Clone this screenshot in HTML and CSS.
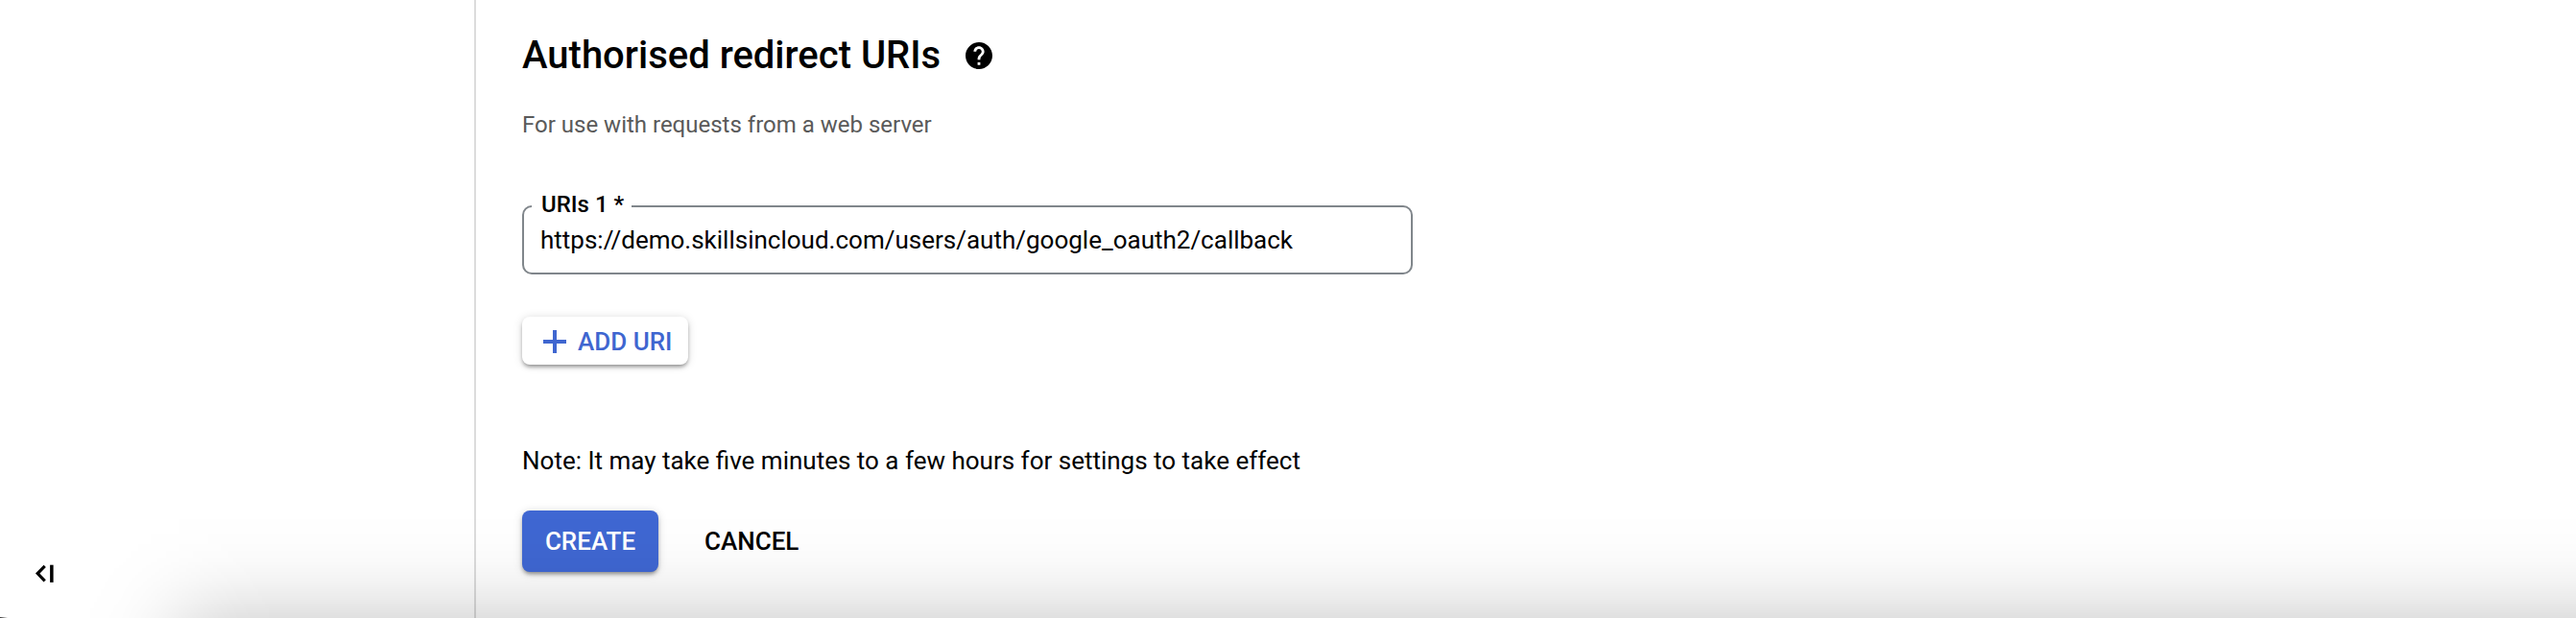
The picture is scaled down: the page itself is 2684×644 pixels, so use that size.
FILE: index.html
```html
<!DOCTYPE html>
<html lang="en-GB">
<head>
  <meta charset="utf-8">
  <title>Create OAuth client ID</title>
  <link rel="stylesheet" href="styles.css">
</head>
<body>
  <aside class="sidebar">
    <button class="collapse" aria-label="Collapse menu">
      <svg width="20" height="20" viewBox="0 0 20 20">
        <path d="M10.7 1.8 3.2 9.6l7.5 7.8" fill="none" stroke="#000" stroke-width="3.2"/>
        <path d="M16.1.7v18.2h3.5V.7z"/>
      </svg>
    </button>
  </aside>

  <main class="content">
    <h2 class="title">
      Authorised redirect URIs
      <svg class="help" viewBox="2 2 20 20">
        <path d="M12 2C6.48 2 2 6.48 2 12s4.48 10 10 10 10-4.48 10-10S17.52 2 12 2zm1 17h-2v-2h2v2zm2.07-7.75l-.9.92C13.45 12.9 13 13.5 13 15h-2v-.5c0-1.1.45-2.1 1.17-2.83l1.24-1.26c.37-.36.59-.86.59-1.41 0-1.1-.9-2-2-2s-2 .9-2 2H8c0-2.21 1.79-4 4-4s4 1.79 4 4c0 .88-.36 1.68-.93 2.25z"/>
      </svg>
    </h2>
    <p class="subtitle">For use with requests from a web server</p>

    <div class="field">
      <span class="field-label">URIs 1 *</span>
      <span class="field-value">https://demo.skillsincloud.com/users/auth/google_oauth2/callback</span>
    </div>

    <button class="add">
      <svg width="24" height="24" viewBox="0 0 24 24">
        <path d="M10 0h4v10h10v4H14v10h-4V14H0v-4h10z" fill="#3f66d0"/>
      </svg>
      ADD URI
    </button>

    <p class="note">Note: It may take five minutes to a few hours for settings to take effect</p>

    <div class="actions">
      <button class="create">CREATE</button>
      <button class="cancel">CANCEL</button>
    </div>
  </main>

  <div class="bottom-shadow"></div>
  <div class="corner"></div>
</body>
</html>
```

FILE: styles.css
```css
* {
  box-sizing: border-box;
}
body {
  position: relative;
  display: flex;
  height: 644px;
  margin: 0;
  overflow: hidden;
  background: #fff;
  color: #000;
  font: 26px/30px Roboto, sans-serif;
}
button {
  border: none;
  padding: 0;
  background: none;
  color: #000;
  font: 500 26px/30px Roboto, sans-serif;
}
svg {
  display: block;
  flex: none;
}

.sidebar {
  display: flex;
  align-items: flex-end;
  width: 496px;
  padding: 0 0 36px 36px;
  border-right: 2px solid #dcdcdc;
}

.content {
  flex: 1;
  padding: 34px 48px 0;
}
.title {
  display: flex;
  align-items: center;
  gap: 26px;
  margin: 0 0 32px;
  font-size: 40px;
  font-weight: 500;
  line-height: 48px;
}
.help {
  width: 28px;
  height: 28px;
}
.subtitle {
  margin: 0 0 68px;
  color: #5a5a5a;
  font-size: 24px;
  line-height: 32px;
}

.field {
  position: relative;
  width: 928px;
  height: 72px;
  padding: 19px 17px;
  border: 2px solid #80868b;
  border-radius: 10px;
}
/* sits over the top border */
.field-label {
  position: absolute;
  top: -15px;
  left: 8px;
  padding: 0 8px 0 10px;
  background: #fff;
  font-size: 24px;
  font-weight: 500;
  line-height: 24px;
}
.field-value {
  display: block;
}

.add {
  display: flex;
  align-items: center;
  gap: 12px;
  width: 173px;
  height: 50px;
  margin-top: 44px;
  padding: 2px 0 0 22px;
  border-radius: 8px;
  box-shadow: 0 3px 4px -1px rgba(0, 0, 0, 0.4), 0 1px 10px rgba(0, 0, 0, 0.15);
  color: #3f66d0;
}

.note {
  margin: 85px 0 37px;
}

.actions {
  display: flex;
  align-items: center;
  gap: 48px;
}
.create {
  width: 142px;
  height: 64px;
  border-radius: 8px;
  background: #3f67d2;
  box-shadow: 0 3px 4px -1px rgba(0, 0, 0, 0.4), 0 1px 10px rgba(0, 0, 0, 0.15);
  color: #fff;
}

/* soft shadow along the bottom edge, fading out to the left */
.bottom-shadow {
  position: absolute;
  left: 77px;
  right: 0;
  bottom: 0;
  height: 110px;
  background: linear-gradient(to top,
    rgba(0, 0, 0, 0.122) 0,
    rgba(0, 0, 0, 0.077) 20px,
    rgba(0, 0, 0, 0.042) 40px,
    rgba(0, 0, 0, 0.019) 60px,
    rgba(0, 0, 0, 0.007) 80px,
    rgba(0, 0, 0, 0) 110px);
  -webkit-mask-image: linear-gradient(to right,
    transparent 0,
    rgba(0, 0, 0, 0.03) 30px,
    rgba(0, 0, 0, 0.08) 50px,
    rgba(0, 0, 0, 0.18) 70px,
    rgba(0, 0, 0, 0.32) 90px,
    rgba(0, 0, 0, 0.5) 110px,
    rgba(0, 0, 0, 0.68) 130px,
    rgba(0, 0, 0, 0.82) 150px,
    rgba(0, 0, 0, 0.92) 170px,
    rgba(0, 0, 0, 0.97) 190px,
    #000 220px);
  pointer-events: none;
}
.corner {
  position: absolute;
  left: 0;
  bottom: 0;
  width: 8px;
  height: 1px;
  background: linear-gradient(to right, #333, transparent);
}
```
